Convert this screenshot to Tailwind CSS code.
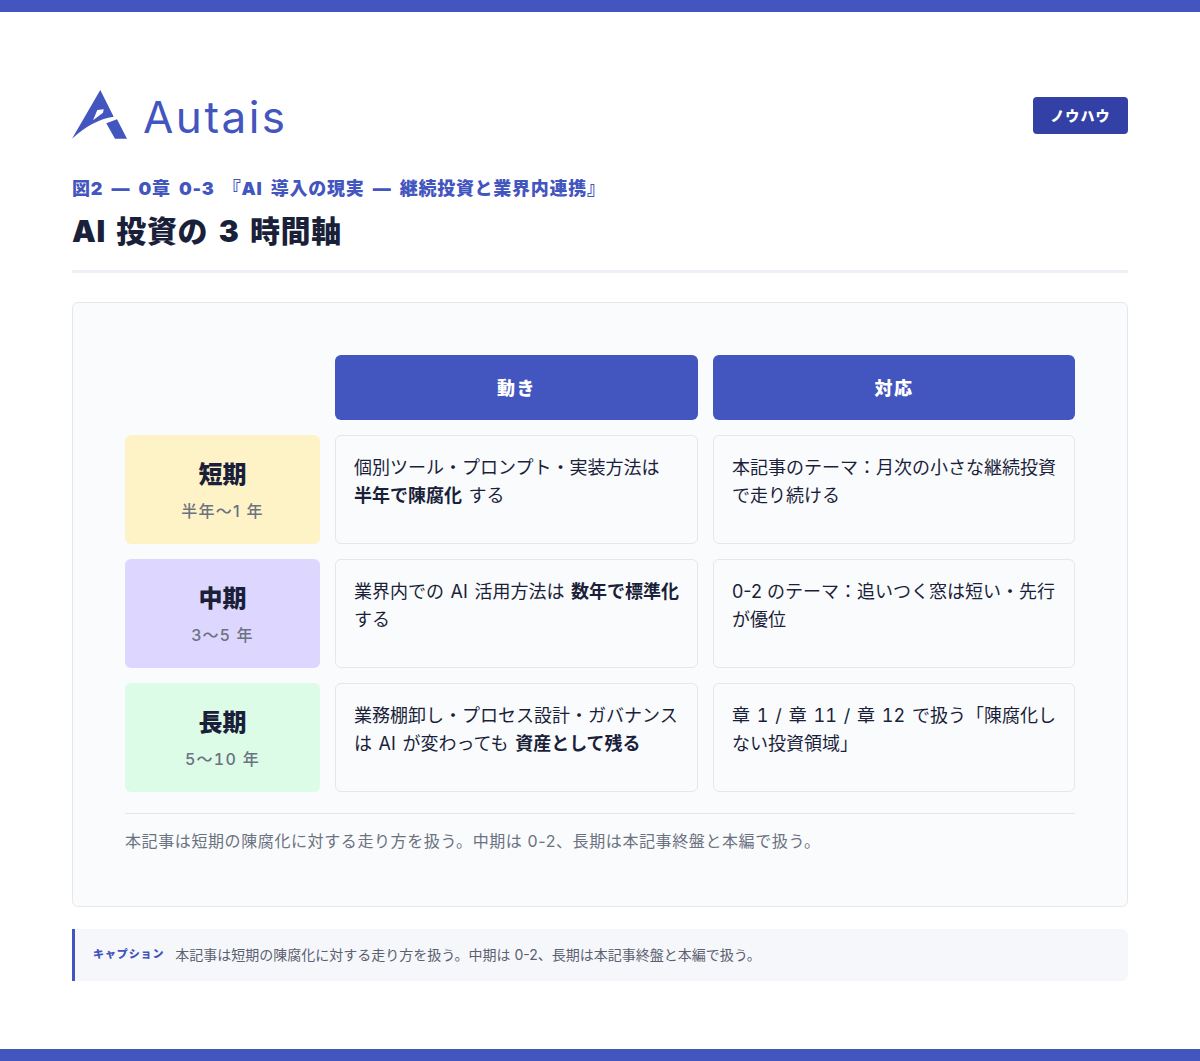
<!DOCTYPE html>
<html lang="ja">
<head>
  <meta charset="UTF-8" />
  <title>AI 投資の 3 時間軸</title>
  <script src="https://cdn.jsdelivr.net/npm/@tailwindcss/browser@4"></script>
</head>
<body class="bg-white text-[#1a1f3a] font-['Inter','Noto_Sans_CJK_JP',sans-serif] w-[1200px] h-[1061px] overflow-hidden flex flex-col">
  <div class="h-3 bg-[#4355be] shrink-0"></div>

  <main class="flex-1 px-[72px] pt-[78px]">
    <header class="flex items-center justify-between h-[50px]">
      <div class="flex items-center gap-[15px]">
        <svg width="56" height="50" viewBox="0 0 56 50" class="block">
          <path fill="#4355be" fill-rule="evenodd" d="M28.300 0 L41.700 26.700 Q20 30 0 48.700 Z M25.300 20 L31.700 19.300 L31 22.700 L21 30.300 Z"/>
          <path fill="#4355be" d="M34.300 33.300 L45 29.300 L55 48.700 L43 48.700 Z"/>
        </svg>
        <span class="pt-[3px] text-[44px] font-normal leading-none tracking-[2.500px] text-[#4355be]">Autais</span>
      </div>
      <span class="w-[95px] h-[37px] flex items-center justify-center rounded-[4px] bg-[#3340a5] text-white text-[14px] font-extrabold tracking-[0.08em]">ノウハウ</span>
    </header>

    <p class="mt-[36px] text-[#4355be] text-[18px] leading-[26px] font-black tracking-[0.04em] [word-spacing:4px]">図2 — 0章 0-3 『AI 導入の現実 — 継続投資と業界内連携』</p>
    <h1 class="mt-[10px] text-[30px] leading-[38px] font-black tracking-[0.02em] [word-spacing:4px]">AI 投資の 3 時間軸</h1>
    <div class="mt-[20px] h-[3px] bg-[#eef0f8]"></div>

    <section class="mt-[29px] h-[605px] bg-[#fafbfd] border border-[#e5e7eb] rounded-md px-[52px] pt-[52px]">
      <div class="grid grid-cols-[195px_363px_362px] grid-rows-[65px_109px_109px_109px] gap-[15px]">
        <div></div>
        <div class="pt-[1px] bg-[#4355be] text-white rounded-md flex items-center justify-center font-black text-[18px] tracking-[0.08em]">動き</div>
        <div class="pt-[1px] bg-[#4355be] text-white rounded-md flex items-center justify-center font-black text-[18px] tracking-[0.08em]">対応</div>

        <div class="pt-[3px] bg-[#fef3c7] rounded-md flex flex-col items-center justify-center">
          <div class="text-[24px] leading-[30px] font-black">短期</div>
          <div class="mt-[10px] text-[16px] leading-[22px] text-[#6b7280] font-medium tracking-[1.300px]">半年〜1 年</div>
        </div>
        <div class="bg-[#fafbfd] border border-[#e5e7eb] rounded-md px-[18px] pt-[18px] text-[18px] leading-[28px] [word-spacing:1.500px]">個別ツール・プロンプト・実装方法は <b class="font-bold">半年で陳腐化</b> する</div>
        <div class="bg-[#fafbfd] border border-[#e5e7eb] rounded-md px-[18px] pt-[18px] text-[18px] leading-[28px] [word-spacing:1.500px]">本記事のテーマ：月次の小さな継続投資で走り続ける</div>

        <div class="pt-[3px] bg-[#ddd6fe] rounded-md flex flex-col items-center justify-center">
          <div class="text-[24px] leading-[30px] font-black">中期</div>
          <div class="mt-[10px] text-[16px] leading-[22px] text-[#6b7280] font-medium tracking-[1.300px]">3〜5 年</div>
        </div>
        <div class="bg-[#fafbfd] border border-[#e5e7eb] rounded-md px-[18px] pt-[18px] text-[18px] leading-[28px] [word-spacing:1.500px]">業界内での AI 活用方法は <b class="font-bold">数年で標準化</b> する</div>
        <div class="bg-[#fafbfd] border border-[#e5e7eb] rounded-md px-[18px] pt-[18px] text-[18px] leading-[28px]">0-2 のテーマ：追いつく窓は短い・先行が優位</div>

        <div class="pt-[3px] bg-[#dcfce7] rounded-md flex flex-col items-center justify-center">
          <div class="text-[24px] leading-[30px] font-black">長期</div>
          <div class="mt-[10px] text-[16px] leading-[22px] text-[#6b7280] font-medium tracking-[1.300px] tabular-nums">5〜10 年</div>
        </div>
        <div class="bg-[#fafbfd] border border-[#e5e7eb] rounded-md px-[18px] pt-[18px] text-[18px] leading-[28px] [word-spacing:1.500px]">業務棚卸し・プロセス設計・ガバナンスは AI が変わっても <b class="font-bold">資産として残る</b></div>
        <div class="bg-[#fafbfd] border border-[#e5e7eb] rounded-md px-[18px] pt-[18px] text-[18px] leading-[28px] [word-spacing:2px] tabular-nums">章 1 / 章 11 / 章 12 で扱う「陳腐化しない投資領域」</div>
      </div>
      <p class="mt-[21px] border-t border-[#e5e7eb] pt-[15px] text-[16px] leading-[24px] tracking-[0.6px] text-[#6b7280]">本記事は短期の陳腐化に対する走り方を扱う。中期は 0-2、長期は本記事終盤と本編で扱う。</p>
    </section>

    <aside class="mt-[22px] h-[52px] bg-[#f6f7fb] border-l-[3px] border-[#4355be] rounded-r-md pl-[18px] pb-[2px] flex items-center gap-[11px]">
      <span class="text-[11px] font-black text-[#4355be] tracking-[0.08em]">キャプション</span>
      <span class="text-[14px] text-[#5b6170]">本記事は短期の陳腐化に対する走り方を扱う。中期は 0-2、長期は本記事終盤と本編で扱う。</span>
    </aside>
  </main>

  <div class="h-3 bg-[#4355be] shrink-0"></div>
</body>
</html>
